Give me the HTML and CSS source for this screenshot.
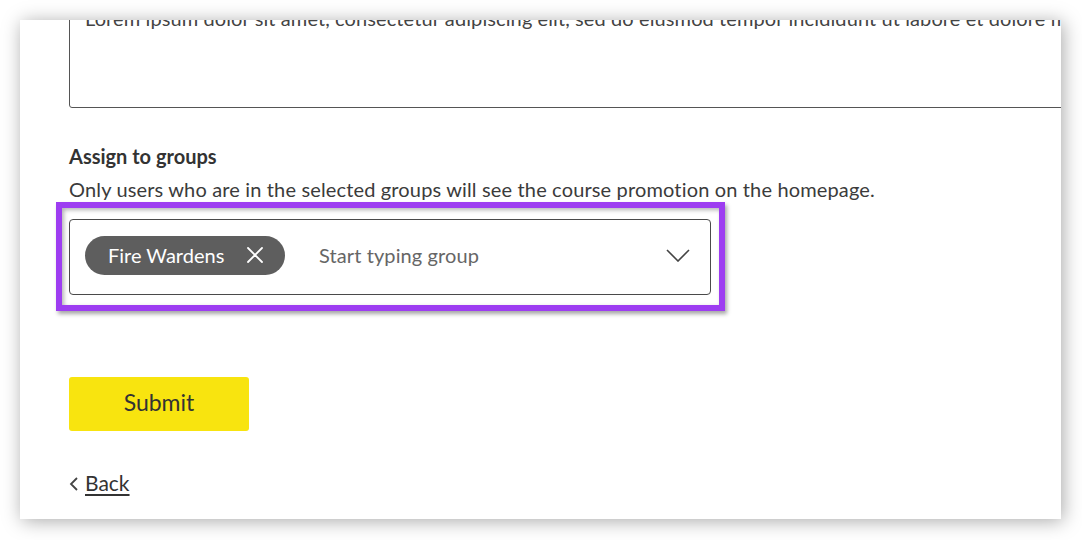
FILE: index.html
```html
<!DOCTYPE html>
<html lang="en">
<head>
<meta charset="utf-8">
<title>Assign to groups</title>
<link rel="stylesheet" href="styles.css">
</head>
<body>
<div class="stage">
  <main class="panel">
    <div class="textarea">Lorem ipsum dolor sit amet, consectetur adipiscing elit, sed do eiusmod tempor incididunt ut labore et dolore magna aliqua. Ut enim ad minim veniam</div>
    <h2 class="label">Assign to groups</h2>
    <p class="hint">Only users who are in the selected groups will see the course promotion on the homepage.</p>
    <div class="highlight">
      <div class="select">
        <span class="chip">Fire Wardens
          <svg class="chip-x" viewBox="0 0 16 16" width="16" height="16"><path d="M1 1 L15 15 M15 1 L1 15" stroke="#fff" stroke-width="1.8" fill="none" stroke-linecap="round"/></svg>
        </span>
        <span class="placeholder">Start typing group</span>
        <svg class="chevron" viewBox="0 0 24 13" width="24" height="13"><path d="M1 1 L12 12 L23 1" stroke="#444" stroke-width="1.6" fill="none"/></svg>
      </div>
    </div>
    <button class="submit">Submit</button>
    <a class="back" href="#"><svg class="back-chev" viewBox="0 0 9 14" width="9" height="14"><path d="M8 1 L2 7 L8 13" stroke="#444" stroke-width="1.8" fill="none"/></svg><span class="back-text">Back</span></a>
  </main>
</div>
</body>
</html>
```
FILE: styles.css
```css
html, body {
  margin: 0;
  padding: 0;
  background: #ffffff;
}
body {
  font-family: Lato, "Noto Sans", "Liberation Sans", sans-serif;
  color: #333;
}
.stage {
  padding: 20px 21px 21px 20px;
}
.panel {
  height: 499px;
  background: #fff;
  box-shadow: 2px 2px 18px rgba(0,0,0,0.34);
  overflow: hidden;
  padding-left: 49px;
  display: flex;
  flex-direction: column;
  align-items: flex-start;
}
.textarea {
  box-sizing: border-box;
  margin-top: -30px;
  height: 118px;
  width: 1100px;
  flex-shrink: 0;
  border: 1px solid #555;
  border-radius: 3px;
  padding: 12px 15px;
  font-size: 20px;
  line-height: 30px;
  letter-spacing: 0.1px;
  color: #444;
  white-space: nowrap;
  overflow: hidden;
}
.label {
  margin: 36px 0 0;
  font-size: 20px;
  line-height: 24px;
  font-weight: 700;
  color: #333;
}
.hint {
  margin: 8px 0 0;
  font-size: 20px;
  line-height: 26px;
  letter-spacing: 0.15px;
  color: #3b3b3b;
}
.highlight {
  margin-left: -13px;
  border: 6px solid #9d3df1;
  padding: 11px 8px 10px 7px;
  box-shadow: 2px 3px 4px rgba(0,0,0,0.35), inset 2px 2px 4px rgba(0,0,0,0.3);
}
.select {
  box-sizing: border-box;
  width: 642px;
  height: 76px;
  border: 1px solid #4a4a4a;
  border-radius: 4px;
  display: flex;
  align-items: center;
  padding: 0 20px 4px 15px;
}
.chip {
  box-sizing: border-box;
  width: 200px;
  height: 39px;
  border-radius: 20px;
  background: #5e5e5e;
  color: #fff;
  font-size: 20px;
  display: flex;
  align-items: center;
  padding: 0 22px 0 23px;
  justify-content: space-between;
}
.chip-x {
  display: block;
}
.placeholder {
  margin-left: 34px;
  font-size: 20px;
  letter-spacing: 0.1px;
  color: #666;
  flex: 1;
}
.chevron {
  display: block;
}
.submit {
  margin-top: 66px;
  width: 180px;
  height: 54px;
  border: none;
  border-radius: 3px;
  background: #f8e40f;
  color: #333;
  font-family: Lato, "Noto Sans", sans-serif;
  font-size: 23px;
  padding: 0 0 4px;
}
.back {
  margin-top: 40px;
  display: flex;
  align-items: center;
  gap: 7px;
  font-size: 21px;
  line-height: 24px;
  color: #333;
  text-decoration: none;
}
.back-chev {
  display: block;
  margin-top: 2px;
}
.back-text {
  text-decoration: underline;
  text-underline-offset: 3px;
}
```
